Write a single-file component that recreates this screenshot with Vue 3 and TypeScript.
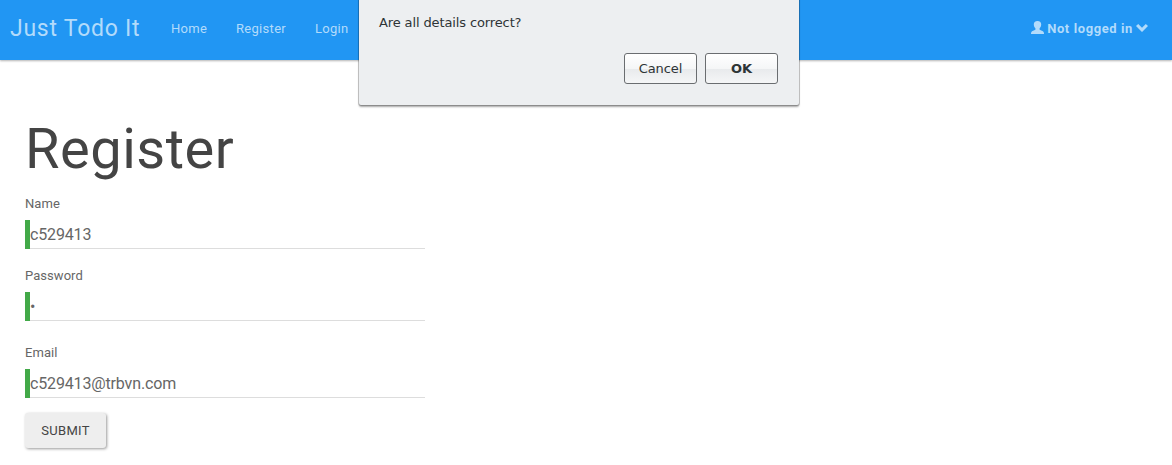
<script setup lang="ts">
import { ref } from 'vue'

interface Field {
  id: string
  label: string
  type: string
  value: string
}

const links: string[] = ['Home', 'Register', 'Login']
const fields = ref<Field[]>([
  { id: 'name', label: 'Name', type: 'text', value: 'c529413' },
  { id: 'password', label: 'Password', type: 'password', value: 'c' },
  { id: 'email', label: 'Email', type: 'text', value: 'c529413@trbvn.com' },
])
</script>

<template>
  <div class="page">
    <nav class="navbar">
      <a class="brand">Just Todo It</a>
      <a v-for="link in links" :key="link" class="link" :class="link.toLowerCase()">{{ link }}</a>
      <a class="account">
        <svg class="user" width="13" height="13" viewBox="0 0 13 13" fill="currentColor">
          <path d="M6.5 0C9 0 10.2 1.3 10.2 3.3C10.2 5.2 9.5 6.5 8.6 7.3V8.8C10 9.5 12 10.2 12.6 11C13 11.6 13 12.2 13 13H0C0 12.2 0 11.6.4 11C1 10.2 3 9.5 4.4 8.8V7.3C3.5 6.5 2.8 5.2 2.8 3.3C2.8 1.3 4 0 6.5 0Z" />
        </svg>
        <span class="status">Not logged in</span>
        <svg class="chevron" width="12" height="8" viewBox="0 0 12 8" fill="currentColor">
          <path d="M2.2 0L6 3.7L9.8 0L12 2.1L6 8L0 2.1Z" />
        </svg>
      </a>
    </nav>

    <main class="content">
      <h1>Register</h1>
      <form @submit.prevent>
        <div v-for="field in fields" :key="field.id" class="field" :class="field.id">
          <label :for="field.id">{{ field.label }}</label>
          <input :id="field.id" v-model="field.value" :type="field.type" spellcheck="false" autocomplete="off" />
        </div>
        <button class="submit" type="submit">SUBMIT</button>
      </form>
    </main>

    <div class="dialog" role="dialog">
      <p>Are all details correct?</p>
      <div class="actions">
        <button type="button">Cancel</button>
        <button type="button" class="ok">OK</button>
      </div>
    </div>
  </div>
</template>

<style>
body {
  margin: 0;
  background: #fff;
  overflow: hidden;
}
</style>

<style scoped>
.page {
  position: relative;
  height: 465px;
  overflow: hidden;
  font-family: Roboto, "Liberation Sans", sans-serif;
  font-size: 13px;
  letter-spacing: 0.05px;
  color: #666;
}
.navbar {
  display: flex;
  align-items: center;
  box-sizing: border-box;
  height: 60px;
  padding: 0 24px 3px 10px;
  background: #2196f3;
  box-shadow: 0 1px 2px rgba(0, 0, 0, 0.3);
  color: #b2dbfb;
}
.brand {
  width: 161px;
  font-size: 23px;
  letter-spacing: 0.75px;
  white-space: nowrap;
}
.link {
  letter-spacing: 0.3px;
}
.home {
  width: 65px;
}
.register {
  width: 79px;
}
.account {
  display: flex;
  align-items: center;
  margin-left: auto;
  font-weight: 700;
  letter-spacing: 0.6px;
}
.status {
  margin: 0 3px;
}
.user,
.chevron {
  position: relative;
  top: -1px;
}
.content {
  padding: 58px 25px 0;
}
h1 {
  margin: 0;
  height: 61px;
  font-size: 56px;
  font-weight: 400;
  line-height: 62px;
  letter-spacing: 0.5px;
  color: #444;
}
form {
  padding-top: 14px;
}
.field {
  width: 400px;
  margin-bottom: 16px;
}
.field.password {
  margin-bottom: 21px;
}
.field.email {
  margin-bottom: 15px;
}
label {
  display: block;
  height: 27px;
  line-height: 21px;
}
input {
  display: block;
  box-sizing: border-box;
  width: 400px;
  height: 29px;
  padding: 0;
  border: 0;
  border-left: 5px solid #42a948;
  border-radius: 0;
  background: transparent;
  box-shadow: inset 0 -1px 0 #ddd;
  font: 16px Roboto, "Liberation Sans", sans-serif;
  letter-spacing: -0.15px;
  color: #666;
  outline: 0;
}
.submit {
  display: block;
  width: 81px;
  height: 35px;
  padding: 0;
  border: 0;
  border-radius: 3px;
  background: #eee;
  box-shadow: 1px 1px 3px rgba(0, 0, 0, 0.4);
  font: 13px Roboto, "Liberation Sans", sans-serif;
  letter-spacing: 0.3px;
  color: #444;
}
.dialog {
  position: absolute;
  top: -4px;
  left: 359px;
  box-sizing: border-box;
  width: 440px;
  height: 109px;
  padding: 19px 21px 0 20px;
  border-radius: 0 0 2px 2px;
  background: #edeff1;
  box-shadow: 0 0 0 1px rgba(0, 0, 0, 0.18), 0 2px 2px rgba(0, 0, 0, 0.35);
  font-family: "DejaVu Sans", sans-serif;
  font-size: 13px;
  letter-spacing: -0.12px;
  color: #2e3436;
}
.dialog p {
  margin: 0;
  height: 38px;
  line-height: 16px;
}
.actions {
  display: flex;
  justify-content: flex-end;
  gap: 8px;
}
.actions button {
  box-sizing: border-box;
  width: 73px;
  height: 31px;
  padding: 0;
  border: 1px solid #6a6d70;
  border-radius: 3px;
  background: linear-gradient(#fff, #f5f6f7 50%, #e8eaec 51%, #f5f6f7);
  font: 13px "DejaVu Sans", sans-serif;
  letter-spacing: -0.1px;
  color: #2e3436;
}
.actions .ok {
  font-weight: 700;
  letter-spacing: 0;
}
</style>
